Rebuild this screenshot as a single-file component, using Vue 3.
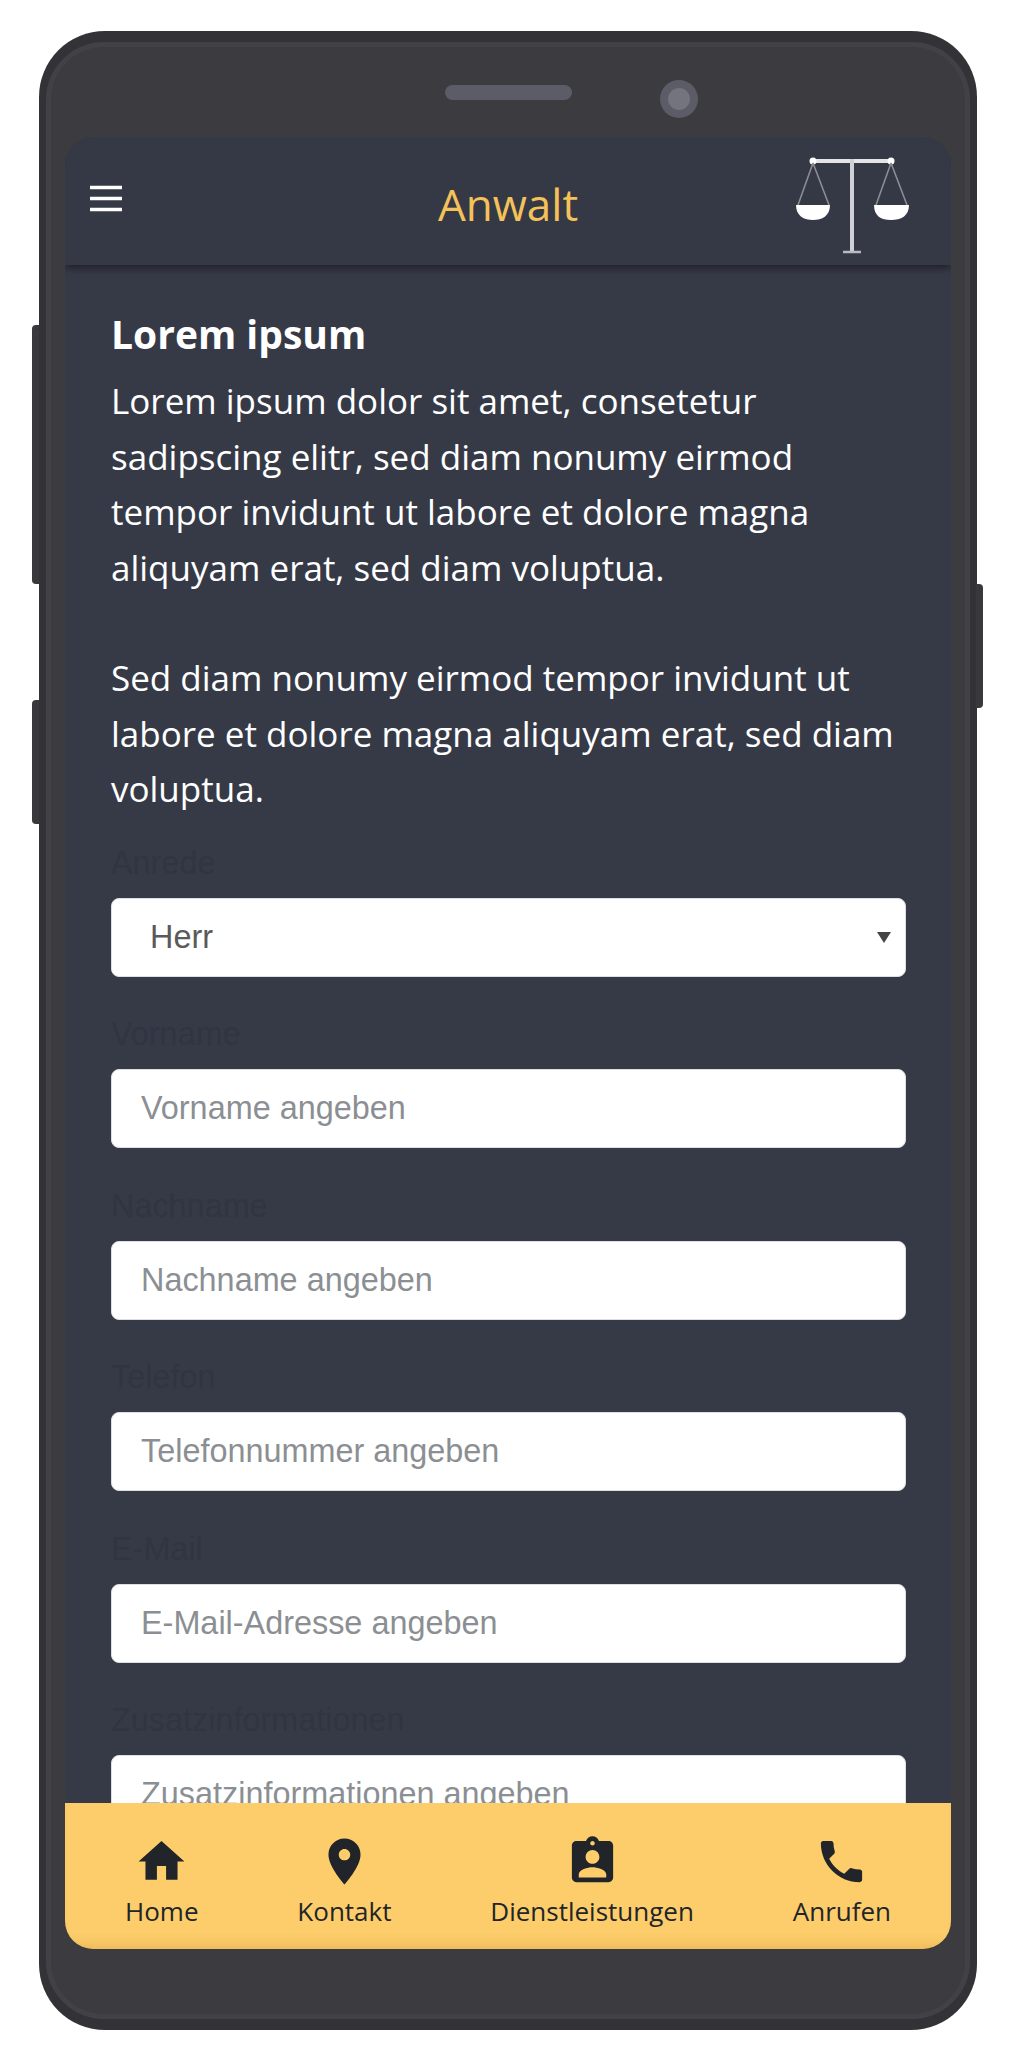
<template>
  <div class="page">
    <div class="phone">
      <span class="side-btn vol-up"></span>
      <span class="side-btn vol-down"></span>
      <span class="side-btn power"></span>

      <div class="bezel">
        <div class="top-bar">
          <span class="speaker"></span>
          <span class="camera"><span class="lens"></span></span>
        </div>

        <div class="screen">
          <header class="app-header">
            <button class="menu-btn" aria-label="Menü">
              <svg width="32" height="27" viewBox="0 0 32 27">
                <path d="M0 2.5h32M0 13.5h32M0 24.5h32" stroke="#fff" stroke-width="3.4" />
              </svg>
            </button>
            <h1 class="app-title">Anwalt</h1>
            <svg class="logo" width="116" height="100" viewBox="0 0 116 100">
              <path d="M18 6h78" stroke="#e4e4e6" stroke-width="4" />
              <path d="M57 4v92" stroke="#cfd0d4" stroke-width="4" />
              <path d="M48 97h18" stroke="#b9bac0" stroke-width="2.5" />
              <circle cx="18" cy="6" r="3.5" fill="#fff" />
              <circle cx="96" cy="6" r="3.5" fill="#fff" />
              <path d="M18 8L3 50M18 8l16 42M96 8L81 50M96 8l16 42" stroke="#8b8d95" stroke-width="1.6" fill="none" />
              <path d="M1 50h34c0 11-8 15-17 15S1 61 1 50z" fill="#fff" />
              <path d="M79 50h35c0 11-8 15-18 15s-17-4-17-15z" fill="#fff" />
            </svg>
          </header>

          <main class="content">
            <h2 class="headline">Lorem ipsum</h2>
            <p class="copy">Lorem ipsum dolor sit amet, consetetur sadipscing elitr, sed diam nonumy eirmod tempor invidunt ut labore et dolore magna aliquyam erat, sed diam voluptua.</p>
            <p class="copy">Sed diam nonumy eirmod tempor invidunt ut labore et dolore magna aliquyam erat, sed diam voluptua.</p>

            <form class="contact-form" @submit.prevent>
              <div class="form-group">
                <label for="salutation">Anrede</label>
                <div class="select-wrap">
                  <select id="salutation" v-model="salutation">
                    <option v-for="s in salutations" :key="s">{{ s }}</option>
                  </select>
                  <span class="caret"></span>
                </div>
              </div>
              <div v-for="f in fields" :key="f.id" class="form-group">
                <label :for="f.id">{{ f.label }}</label>
                <input :id="f.id" type="text" :placeholder="f.placeholder" />
              </div>
            </form>
          </main>

          <nav class="tabbar">
            <a v-for="t in tabs" :key="t.label" class="tab">
              <svg width="55" height="55" viewBox="0 0 24 24"><path :d="t.icon" fill="#212529" /></svg>
              <span>{{ t.label }}</span>
            </a>
          </nav>
        </div>
      </div>
    </div>
  </div>
</template>

<script setup>
import { ref } from "vue";

const salutations = ["Herr", "Frau"];
const salutation = ref("Herr");

const fields = [
  { id: "first", label: "Vorname", placeholder: "Vorname angeben" },
  { id: "last", label: "Nachname", placeholder: "Nachname angeben" },
  { id: "phone", label: "Telefon", placeholder: "Telefonnummer angeben" },
  { id: "mail", label: "E-Mail", placeholder: "E-Mail-Adresse angeben" },
  { id: "info", label: "Zusatzinformationen", placeholder: "Zusatzinformationen angeben" }
];

const tabs = [
  { label: "Home", icon: "M10 20v-6h4v6h5v-8h3L12 3 2 12h3v8z" },
  { label: "Kontakt", icon: "M12 2C8.13 2 5 5.13 5 9c0 5.25 7 13 7 13s7-7.75 7-13c0-3.87-3.13-7-7-7zm0 9.5c-1.38 0-2.5-1.12-2.5-2.5s1.12-2.5 2.5-2.5 2.5 1.12 2.5 2.5-1.12 2.5-2.5 2.5z" },
  { label: "Dienstleistungen", icon: "M19 3h-4.18C14.4 1.84 13.3 1 12 1c-1.3 0-2.4.84-2.82 2H5c-1.1 0-2 .9-2 2v14c0 1.1.9 2 2 2h14c1.1 0 2-.9 2-2V5c0-1.1-.9-2-2-2zm-7 0c.55 0 1 .45 1 1s-.45 1-1 1-1-.45-1-1 .45-1 1-1zm0 4c1.66 0 3 1.34 3 3s-1.34 3-3 3-3-1.34-3-3 1.34-3 3-3zm6 12H6v-1.4c0-2 4-3.1 6-3.1s6 1.1 6 3.1V19z" },
  { label: "Anrufen", icon: "M6.62 10.79c1.44 2.83 3.76 5.14 6.59 6.59l2.2-2.2c.27-.27.67-.36 1.02-.24 1.12.37 2.33.57 3.57.57.55 0 1 .45 1 1V20c0 .55-.45 1-1 1-9.39 0-17-7.61-17-17 0-.55.45-1 1-1h3.5c.55 0 1 .45 1 1 0 1.25.2 2.45.57 3.57.11.35.03.74-.25 1.02l-2.2 2.2z" }
];
</script>

<style scoped>
.page {
  height: 2057px;
  box-sizing: border-box;
  padding: 31px 0 0 39px;
  overflow: hidden;
  background: #fff;
  font-family: "Open Sans", "Noto Sans", sans-serif;
}

.phone {
  position: relative;
  width: 938px;
  height: 1999px;
  box-sizing: border-box;
  padding: 11px 7px;
  background: #333236;
  border-radius: 66px;
}

.side-btn {
  position: absolute;
  width: 7px;
  background: #39383c;
}
.vol-up { left: -7px; top: 294px; height: 259px; border-radius: 4px 0 0 4px; }
.vol-down { left: -7px; top: 669px; height: 124px; border-radius: 4px 0 0 4px; }
.power { right: -6px; top: 553px; height: 124px; border-radius: 0 4px 4px 0; }

.bezel {
  height: 100%;
  box-sizing: border-box;
  border: 5px solid #424146;
  border-radius: 58px;
  background: #3c3b40;
  padding: 0 14px;
  display: flex;
  flex-direction: column;
}

.top-bar {
  height: 90px;
  flex: none;
  display: flex;
  align-items: flex-start;
  justify-content: center;
  padding: 33px 0 0 126px;
  box-sizing: border-box;
}
.speaker {
  width: 127px;
  height: 15px;
  margin-top: 5px;
  border-radius: 8px;
  background: #5c5c68;
}
.camera {
  width: 38px;
  height: 38px;
  margin-left: 88px;
  border-radius: 50%;
  background: #5c5c68;
  display: flex;
  align-items: center;
  justify-content: center;
}
.lens {
  width: 22px;
  height: 22px;
  border-radius: 50%;
  background: #74747f;
}

.screen {
  height: 1812px;
  flex: none;
  display: flex;
  flex-direction: column;
  overflow: hidden;
  border-radius: 28px;
  background: #363a47;
}

.app-header {
  height: 128px;
  flex: none;
  box-sizing: border-box;
  display: grid;
  grid-template-columns: 1fr auto 1fr;
  align-items: center;
  padding: 0 25px;
  background: #353945;
  box-shadow: 0 3px 8px rgba(0, 0, 0, 0.45);
  position: relative;
}
.menu-btn {
  justify-self: start;
  padding: 0;
  margin-top: -6px;
  background: none;
  border: none;
  display: flex;
}
.app-title {
  margin: 6px 0 0;
  font-size: 44px;
  font-weight: 400;
  line-height: 1;
  color: #f5c25a;
}
.logo {
  justify-self: end;
  margin: 8px 15px 0 0;
}

.content {
  flex: 1;
  min-height: 0;
  overflow: hidden;
  padding: 44px 45px 0 46px;
  color: #fff;
}
.headline {
  margin: 0 0 14px;
  font-size: 39px;
  font-weight: 700;
  line-height: 50px;
}
.copy {
  margin: 0 0 55px;
  font-size: 35px;
  line-height: 55.5px;
}
.copy:last-of-type {
  margin-bottom: 22px;
}

.form-group {
  margin-bottom: 33.5px;
}
.form-group label {
  display: block;
  height: 49px;
  margin-bottom: 10px;
  font-family: "Liberation Sans", Arial, sans-serif;
  font-size: 32.4px;
  line-height: 49px;
  color: #313541;
}
.form-group input,
.form-group select {
  display: block;
  width: 100%;
  height: 79px;
  box-sizing: border-box;
  padding: 0 29px;
  border: 1px solid #dcdfe3;
  border-radius: 8px;
  background: #fff;
  font-family: "Liberation Sans", Arial, sans-serif;
  font-size: 32.4px;
  color: #5a5a5a;
  outline: none;
  appearance: none;
}
.form-group select {
  padding-left: 38px;
}
.form-group input::placeholder {
  color: #8b8f93;
  opacity: 1;
}

.select-wrap {
  position: relative;
}
.caret {
  position: absolute;
  right: 15px;
  top: 34px;
  width: 0;
  height: 0;
  border-left: 7px solid transparent;
  border-right: 7px solid transparent;
  border-top: 11px solid #444;
}

.tabbar {
  height: 146px;
  flex: none;
  box-sizing: border-box;
  display: flex;
  justify-content: space-between;
  padding: 31px 60px 0;
  background: #fdcd6b;
  box-shadow: inset 0 -12px 14px -10px rgba(170, 115, 20, 0.3);
  position: relative;
}
.tab {
  display: flex;
  flex-direction: column;
  align-items: center;
  color: #212529;
  font-size: 26px;
  line-height: 38px;
}
.tab svg {
  display: block;
  margin-bottom: 3px;
}
</style>
